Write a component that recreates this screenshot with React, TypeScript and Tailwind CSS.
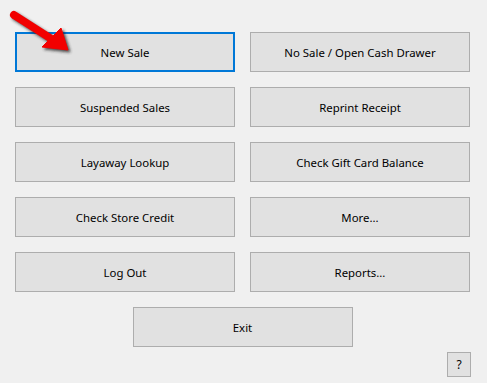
const left = ["New Sale", "Suspended Sales", "Layaway Lookup", "Check Store Credit", "Log Out"];
const right = ["No Sale / Open Cash Drawer", "Reprint Receipt", "Check Gift Card Balance", "More...", "Reports..."];

const btn =
  "h-[40px] w-[220px] bg-[#e1e1e1] border border-[#adadad] text-[11.4px] text-black flex items-center justify-center pt-[1px]";

const App = () => {
  return (
    <div
      className="relative w-[487px] h-[383px] bg-[#f0f0f0] overflow-hidden"
      style={{ fontFamily: '"Noto Sans", "Open Sans", sans-serif' }}
    >
      <div className="pl-[15px] pt-[32px]">
        <div className="grid grid-cols-[220px_220px] gap-x-[15px] gap-y-[15px]">
          {left.map((l, i) => (
            <div key={l} className="contents">
              <button
                className={
                  i === 0
                    ? "h-[40px] w-[220px] bg-[#e1e1e1] border-2 border-[#0078d7] text-[11.4px] text-black flex items-center justify-center pt-[1px]"
                    : btn
                }
              >
                {l}
              </button>
              <button className={btn}>{right[i]}</button>
            </div>
          ))}
        </div>
        <div className="mt-[15px] w-[455px] flex justify-center">
          <button className={btn}>Exit</button>
        </div>
      </div>
      <div className="flex justify-end pr-[16px] mt-[5px]">
        <button className="w-[24px] h-[25px] bg-[#e1e1e1] border border-[#adadad] text-[12px] text-black flex items-center justify-center">
          ?
        </button>
      </div>

      {/* red pointer arrow over the first button */}
      <svg className="absolute left-0 top-0" width="90" height="65" viewBox="0 0 90 65">
        <defs>
          <filter id="sh" x="-20%" y="-20%" width="150%" height="150%">
            <feGaussianBlur stdDeviation="1.6" />
          </filter>
        </defs>
        <g transform="translate(2 2)" filter="url(#sh)" fill="#222" stroke="#222" opacity="0.8">
          <line x1="14" y1="15" x2="50" y2="38" strokeWidth="8" strokeLinecap="round" />
          <polygon points="68,50 42,47 61,28" strokeWidth="1" />
        </g>
        <g fill="#f20000" stroke="#f20000">
          <line x1="14" y1="15" x2="50" y2="38" strokeWidth="8" strokeLinecap="round" />
          <polygon points="68,50 42,47 61,28" strokeWidth="1" strokeLinejoin="round" />
        </g>
      </svg>
    </div>
  );
};

export default App;
